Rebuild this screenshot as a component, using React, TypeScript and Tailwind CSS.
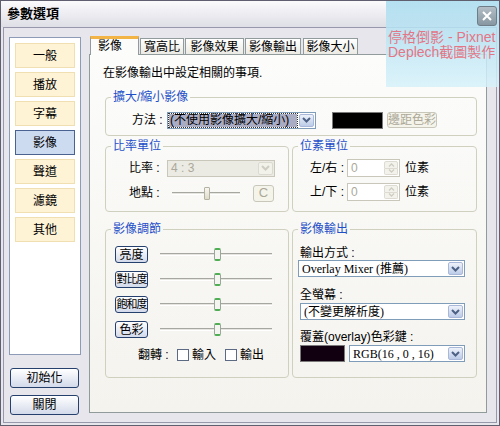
function Chevron({ color }: { color: string }) {
  return (
    <svg width="9" height="6" viewBox="0 0 9 6">
      <polyline points="1,1 4.5,4.5 8,1" fill="none" stroke={color} strokeWidth="2" />
    </svg>
  );
}

interface SelectProps {
  text: string;
  className?: string;
  hl?: boolean;
  disabled?: boolean;
  serif?: boolean;
}

function Select({ text, className = "", hl = false, disabled = false, serif = false }: SelectProps) {
  return (
    <div
      className={`flex h-[17px] border ${
        disabled ? "border-[#c9c7ba] bg-[#ebebe4]" : "border-[#7f9db9] bg-white"
      } ${className}`}
    >
      <div
        className={`flex min-w-0 flex-1 items-center overflow-hidden whitespace-nowrap ${
          serif ? "font-['Liberation_Serif','Noto_Sans_CJK_TC',serif]" : ""
        } ${disabled ? "text-[#aca899]" : "text-black"}`}
      >
        {hl ? (
          <div className="m-[1px] flex h-[13px] flex-1 items-center bg-[#aaacc4] px-[1px] outline-1 outline-[#333] outline-dotted">
            {text}
          </div>
        ) : (
          <span className="px-[3px]">{text}</span>
        )}
      </div>
      <div
        className={`m-[1px] flex w-[15px] items-center justify-center rounded-[2px] border ${
          disabled
            ? "border-[#dcdad0] bg-[#f2f1ea]"
            : "border-[#a9b8d9] bg-linear-to-b from-[#eef2fa] to-[#bccbe8]"
        }`}
      >
        <Chevron color={disabled ? "#cfcdc2" : "#4d6185"} />
      </div>
    </div>
  );
}

function XpButton({
  children,
  className = "",
  disabled = false,
}: {
  children: React.ReactNode;
  className?: string;
  disabled?: boolean;
}) {
  return (
    <div
      className={`flex items-center justify-center rounded-[3px] border ${
        disabled
          ? "border-[#c9c7ba] bg-[#f5f4ea] text-[#aca899]"
          : "border-[#26406e] bg-linear-to-b from-white to-[#d3daea] text-black"
      } ${className}`}
    >
      {children}
    </div>
  );
}

function Spin() {
  return (
    <div className="flex h-[18px] w-[53px] border border-[#c9c7ba] bg-white">
      <span className="flex-1 pl-[3px] leading-[16px] text-[#aca899]">0</span>
      <div className="m-[1px] flex w-[14px] flex-col">
        <div className="flex flex-1 items-center justify-center rounded-t-[2px] border border-[#dedcd2] bg-[#f3f2ec]">
          <svg width="7" height="4" viewBox="0 0 7 4">
            <polyline points="1,3.5 3.5,1 6,3.5" fill="none" stroke="#cfcdc2" strokeWidth="1.3" />
          </svg>
        </div>
        <div className="flex flex-1 items-center justify-center rounded-b-[2px] border border-t-0 border-[#dedcd2] bg-[#f3f2ec]">
          <svg width="7" height="4" viewBox="0 0 7 4">
            <polyline points="1,0.5 3.5,3 6,0.5" fill="none" stroke="#cfcdc2" strokeWidth="1.3" />
          </svg>
        </div>
      </div>
    </div>
  );
}

function Slider({ className, thumb }: { className: string; thumb: string }) {
  return (
    <div className={`relative h-[17px] ${className}`}>
      <div className="absolute top-[7px] right-0 left-0 h-[3px] border-t border-b border-t-[#a7a7a2] border-b-white bg-[#e6e5df]" />
      <div className={`absolute top-[2px] h-[13px] ${thumb}`} />
    </div>
  );
}

function Group({
  legend,
  className = "",
  children,
}: {
  legend: string;
  className?: string;
  children: React.ReactNode;
}) {
  return (
    <fieldset className={`rounded-[4px] border border-[#d0d0bf] ${className}`}>
      <legend className="ml-[5px] px-[2px] leading-[14px] text-[#1f50c8]">{legend}</legend>
      {children}
    </fieldset>
  );
}

export default function App() {
  const nav = ["一般", "播放", "字幕", "影像", "聲道", "濾鏡", "其他"];
  const tabs = [
    { label: "寬高比", w: "w-[44px] ml-[1px]" },
    { label: "影像效果", w: "w-[59px] ml-[1px]" },
    { label: "影像輸出", w: "w-[56px] ml-[1px]" },
    { label: "影像大小", w: "w-[55px] ml-[2px]" },
  ];
  const adjust = ["亮度", "對比度", "飽和度", "色彩"];

  return (
    <div className="relative flex h-[426px] w-[500px] flex-col overflow-hidden border border-[#5f5f70] bg-[#e6e6ec] font-['Liberation_Sans','Noto_Sans_CJK_TC',sans-serif] text-[12px] text-black">
      {/* title bar */}
      <div className="flex h-[26px] items-center bg-linear-to-b from-[#fbfbfd] to-[#dedee6] pl-[6px]">
        <span className="text-[13px] font-bold">參數選項</span>
      </div>

      <div className="mx-[2px] mb-[2px] flex flex-1 border border-[#9898ac] pt-[8px] pl-[5px]">
        {/* left column */}
        <div className="mt-[1px] flex w-[72px] flex-col">
          <div className="flex h-[318px] flex-col gap-[4px] border border-[#8d9bb6] bg-white px-[5px] pt-[5px]">
            {nav.map((n) => (
              <div
                key={n}
                className={`flex h-[25px] w-[60px] items-center justify-center border ${
                  n === "影像"
                    ? "border-[#4a6290] bg-[#cddbf1]"
                    : "border-[#f0dfb0] bg-[#fff3d6]"
                }`}
              >
                {n}
              </div>
            ))}
          </div>
          <XpButton className="mt-[13px] ml-[1px] h-[20px] w-[69px]">初始化</XpButton>
          <XpButton className="mt-[7px] ml-[1px] h-[20px] w-[69px]">關閉</XpButton>
        </div>

        {/* tab area */}
        <div className="ml-[8px] w-[398px]">
          <div className="flex h-[18px] items-end">
            <div className="relative z-10 -mb-px ml-[1px] flex h-[19px] w-[49px] items-center border-x border-[#919b9c] border-t-[3px] border-t-[#f2b545] bg-[#fcfcfb] pb-[2px] pl-[7px]">
              影像
            </div>
            {tabs.map((t) => (
              <div
                key={t.label}
                className={`flex h-[16px] items-center justify-center border border-b-0 border-[#919b9c] bg-linear-to-b from-white to-[#ebeae4] ${t.w}`}
              >
                {t.label}
              </div>
            ))}
          </div>

          <div className="h-[359px] border border-[#919b9c] bg-linear-to-b from-[#fcfcfb] to-[#f4f3ee]">
            <div className="mt-[11px] pl-[13px] leading-[14px]">在影像輸出中設定相關的事項.</div>

            <Group legend="擴大/縮小影像" className="mt-[10px] ml-[15px] w-[372px]">
              <div className="mt-[7px] mb-[6px] flex items-center pl-[26px]">
                <span className="w-[35px]">方法 :</span>
                <Select text="(不使用影像擴大/縮小)" hl className="w-[149px]" />
                <div className="ml-[16px] h-[17px] w-[51px] border border-[#7a7a7a] bg-black" />
                <XpButton disabled className="ml-[4px] h-[16px] w-[50px]">
                  邊距色彩
                </XpButton>
              </div>
            </Group>

            <div className="mt-[3px] ml-[15px] flex gap-[3px]">
              <Group legend="比率單位" className="w-[184px]">
                <div className="mt-[6px] flex items-center pl-[23px]">
                  <span className="w-[38px]">比率 :</span>
                  <Select text="4 : 3" disabled className="w-[108px]" />
                </div>
                <div className="mt-[7px] mb-[9px] flex items-center pl-[23px]">
                  <span className="w-[38px]">地點 :</span>
                  <Slider
                    className="ml-[5px] w-[68px]"
                    thumb="left-[32px] w-[6px] rounded-[1px] border border-[#b5b2a2] bg-linear-to-b from-[#f7f6f0] to-[#dedbcc]"
                  />
                  <XpButton disabled className="ml-[13px] h-[17px] w-[21px] text-[13px]">
                    C
                  </XpButton>
                </div>
              </Group>
              <Group legend="位素單位" className="w-[185px]">
                <div className="mt-[6px] flex items-center pl-[17px]">
                  <span className="w-[37px]">左/右 :</span>
                  <Spin />
                  <span className="ml-[5px]">位素</span>
                </div>
                <div className="mt-[6px] flex items-center pl-[17px]">
                  <span className="w-[37px]">上/下 :</span>
                  <Spin />
                  <span className="ml-[5px]">位素</span>
                </div>
              </Group>
            </div>

            <div className="mt-[10px] ml-[15px] flex gap-[3px]">
              <Group legend="影像調節" className="h-[156px] w-[184px]">
                <div className="mt-[10px] flex flex-col gap-[8px] pl-[9px]">
                  {adjust.map((a) => (
                    <div key={a} className="flex items-center">
                      <XpButton
                        className={`h-[17px] w-[33px] whitespace-nowrap ${
                          a.length > 2 ? "text-[11px] tracking-[-1px]" : ""
                        }`}
                      >
                        {a}
                      </XpButton>
                      <Slider
                        className="ml-[12px] w-[112px]"
                        thumb="left-[54px] w-[7px] rounded-[2px] border-x border-y-2 border-x-[#9aa89a] border-y-[#4fae54] bg-[#f4f4f0]"
                      />
                    </div>
                  ))}
                </div>
                <div className="mt-[10px] flex h-[14px] items-center pl-[32px]">
                  <span className="w-[39px]">翻轉 :</span>
                  <span className="h-[12px] w-[12px] border border-[#5c6a84] bg-white" />
                  <span className="ml-[3px]">輸入</span>
                  <span className="ml-[9px] h-[12px] w-[12px] border border-[#5c6a84] bg-white" />
                  <span className="ml-[3px]">輸出</span>
                </div>
              </Group>
              <Group legend="影像輸出" className="h-[156px] w-[185px]">
                <div className="mt-[10px] pl-[7px] leading-[14px]">輸出方式 :</div>
                <Select text="Overlay Mixer (推薦)" serif className="ml-[5px] w-[167px]" />
                <div className="mt-[11px] pl-[7px] leading-[14px]">全螢幕 :</div>
                <Select text="(不變更解析度)" serif className="mt-[1px] ml-[7px] w-[165px]" />
                <div className="mt-[10px] pl-[7px] leading-[14px]">覆蓋(overlay)色彩鍵 :</div>
                <div className="mt-[1px] ml-[7px] flex">
                  <div className="h-[17px] w-[45px] border border-[#7a7a7a] bg-[#100010]" />
                  <Select text="RGB(16 , 0 , 16)" serif className="ml-[4px] w-[116px]" />
                </div>
              </Group>
            </div>
          </div>
        </div>
      </div>

      {/* watermark overlay */}
      <div className="absolute top-0 left-[385px] z-20 h-[86px] w-[115px] bg-linear-to-b from-[#a9dcef]/85 to-[#d6f1fa]/85 pt-[29px] pl-[2px] text-[14px] leading-[15px] whitespace-nowrap text-[#e27686]">
        <div>停格倒影 - Pixnet</div>
        <div>Deplech截圖製作</div>
      </div>
      {/* close button */}
      <div className="absolute top-[5px] left-[476px] z-30 flex h-[20px] w-[20px] items-center justify-center rounded-[3px] border border-[#6f7d88] bg-linear-to-b from-[#b3bec6] to-[#8797a2]">
        <svg width="12" height="12" viewBox="0 0 12 12">
          <path d="M2 2 L10 10 M10 2 L2 10" stroke="white" strokeWidth="2" />
        </svg>
      </div>
    </div>
  );
}
